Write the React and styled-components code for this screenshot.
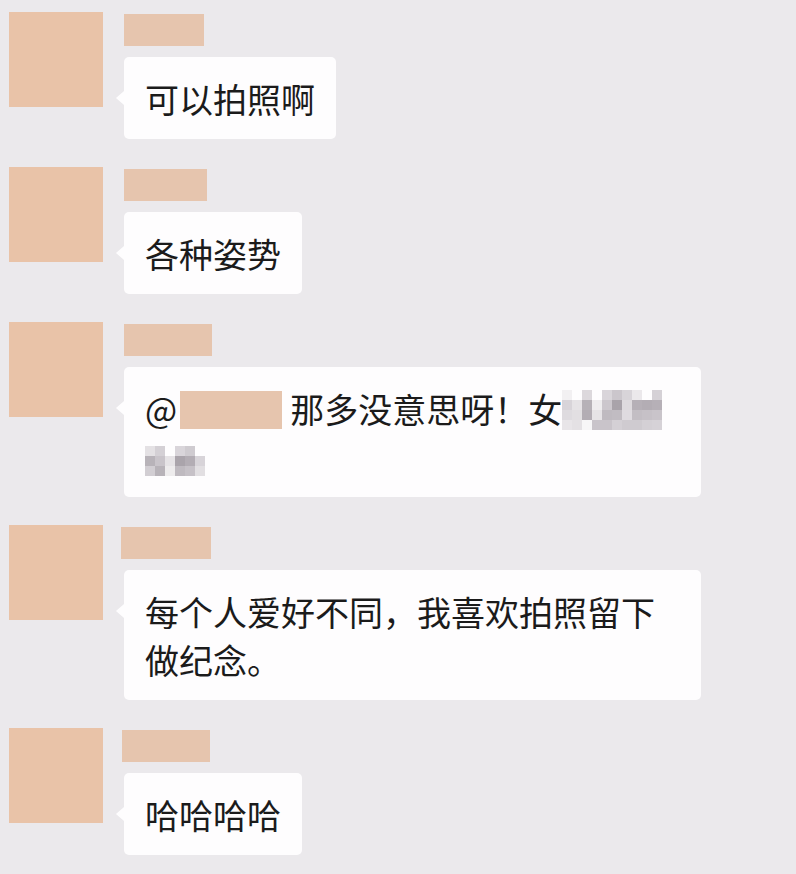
import React from "react";
import styled, { createGlobalStyle } from "styled-components";

const GlobalStyle = createGlobalStyle`
  html, body {
    margin: 0;
    padding: 0;
    background: #ebe9ec;
  }
  body {
    font-family: "Noto Sans CJK SC", "Noto Sans", sans-serif;
  }
`;

const Chat = styled.div`
  width: 796px;
  height: 874px;
  box-sizing: border-box;
  padding: 12px 0 0 9px;
  display: flex;
  flex-direction: column;
  gap: 28px;
  background: #ebe9ec;
  overflow: hidden;
`;

const Row = styled.div`
  display: flex;
  align-items: flex-start;
  gap: 21px;
`;

const Avatar = styled.div`
  flex: none;
  width: 94px;
  height: 95px;
  background: #e9c3a8;
`;

const Body = styled.div`
  display: flex;
  flex-direction: column;
  align-items: flex-start;
  gap: 11px;
  padding-top: 2px;
`;

const NameBar = styled.div`
  width: ${(p) => p.$w}px;
  height: 32px;
  background: #e6c5ae;
  margin-left: ${(p) => p.$shift || 0}px;
`;

const Bubble = styled.div`
  position: relative;
  box-sizing: border-box;
  width: ${(p) => (p.$wide ? "577px" : "auto")};
  padding: 18px 21px 16px;
  background: #fefdfe;
  border-radius: 5px;
  color: #1b1b1b;
  font-size: 34px;
  line-height: 48px;
  font-family: "Noto Sans CJK SC", "Noto Sans", sans-serif;

  &::before {
    content: "";
    position: absolute;
    left: -8px;
    top: 34px;
    border-style: solid;
    border-width: 7px 8px 7px 0;
    border-color: transparent #fefdfe transparent transparent;
  }
`;

const Mention = styled.span`
  display: inline-block;
  width: 102px;
  height: 38px;
  margin: 0 8px 0 3px;
  background: #e6c5ae;
  vertical-align: -6px;
`;

const Mosaic = styled.span`
  display: inline-grid;
  grid-template-columns: repeat(${(p) => p.$cols}, 10px);
  grid-auto-rows: 10px;
  vertical-align: top;
  margin-top: ${(p) => p.$top}px;
`;

const Cell = styled.span`
  background: ${(p) => p.$c};
`;

const W = "#fefdfe";
const line1 = [
  ["#f2f0f2", W, "#dcd8dc", W, "#d9d5da", "#cbc6cc", "#d8d4d9", "#ebe8eb", W, "#d5d1d6"],
  ["#d8d4d9", "#e6e3e6", "#b6b1b7", "#efedef", "#ccc7cd", "#a9a3aa", "#dedade", "#b6b0b7", "#b3adb4", "#b6b0b7"],
  ["#dedbdf", "#e2dfe2", "#b3adb4", "#e6e3e6", "#bfbac0", "#c1bcc2", "#dfdbe0", "#c3bec4", "#c6c1c7", "#c9c4ca"],
  ["#e8e5e8", "#e4e1e4", "#f7f6f7", "#c9c4ca", "#c9c4ca", "#d4d0d5", "#cfcbd0", "#cfcbd0", "#d4d0d5", "#d6d2d7"],
];
const line2 = [
  ["#e4e1e4", "#d4d0d5", W, "#d9d5da", "#cfcbd0", W, W],
  ["#b8b3b9", "#c9c4ca", "#e6e3e6", "#aaa4ab", "#b3adb4", "#d8d4d9", W],
  ["#d2ced3", "#b8b3b9", "#eeeced", "#bfbac0", "#c6c1c7", "#e2dfe2", W],
];

const Pixels = ({ rows, top }) => (
  <Mosaic $cols={rows[0].length} $top={top}>
    {rows.flat().map((c, i) => (
      <Cell key={i} $c={c} />
    ))}
  </Mosaic>
);

const messages = [
  { name: 80, text: "可以拍照啊" },
  { name: 83, text: "各种姿势" },
  {
    name: 88,
    wide: true,
    text: (
      <>
        @<Mention />那多没意思呀！女<Pixels rows={line1} top={5} />
        <br />
        <Pixels rows={line2} top={13} />
      </>
    ),
  },
  { name: 90, shift: -3, wide: true, text: "每个人爱好不同，我喜欢拍照留下做纪念。" },
  { name: 88, shift: -2, text: "哈哈哈哈" },
];

export default function App() {
  return (
    <>
      <GlobalStyle />
      <Chat>
        {messages.map((m, i) => (
          <Row key={i}>
            <Avatar />
            <Body>
              <NameBar $w={m.name} $shift={m.shift} />
              <Bubble $wide={m.wide}>{m.text}</Bubble>
            </Body>
          </Row>
        ))}
      </Chat>
    </>
  );
}
